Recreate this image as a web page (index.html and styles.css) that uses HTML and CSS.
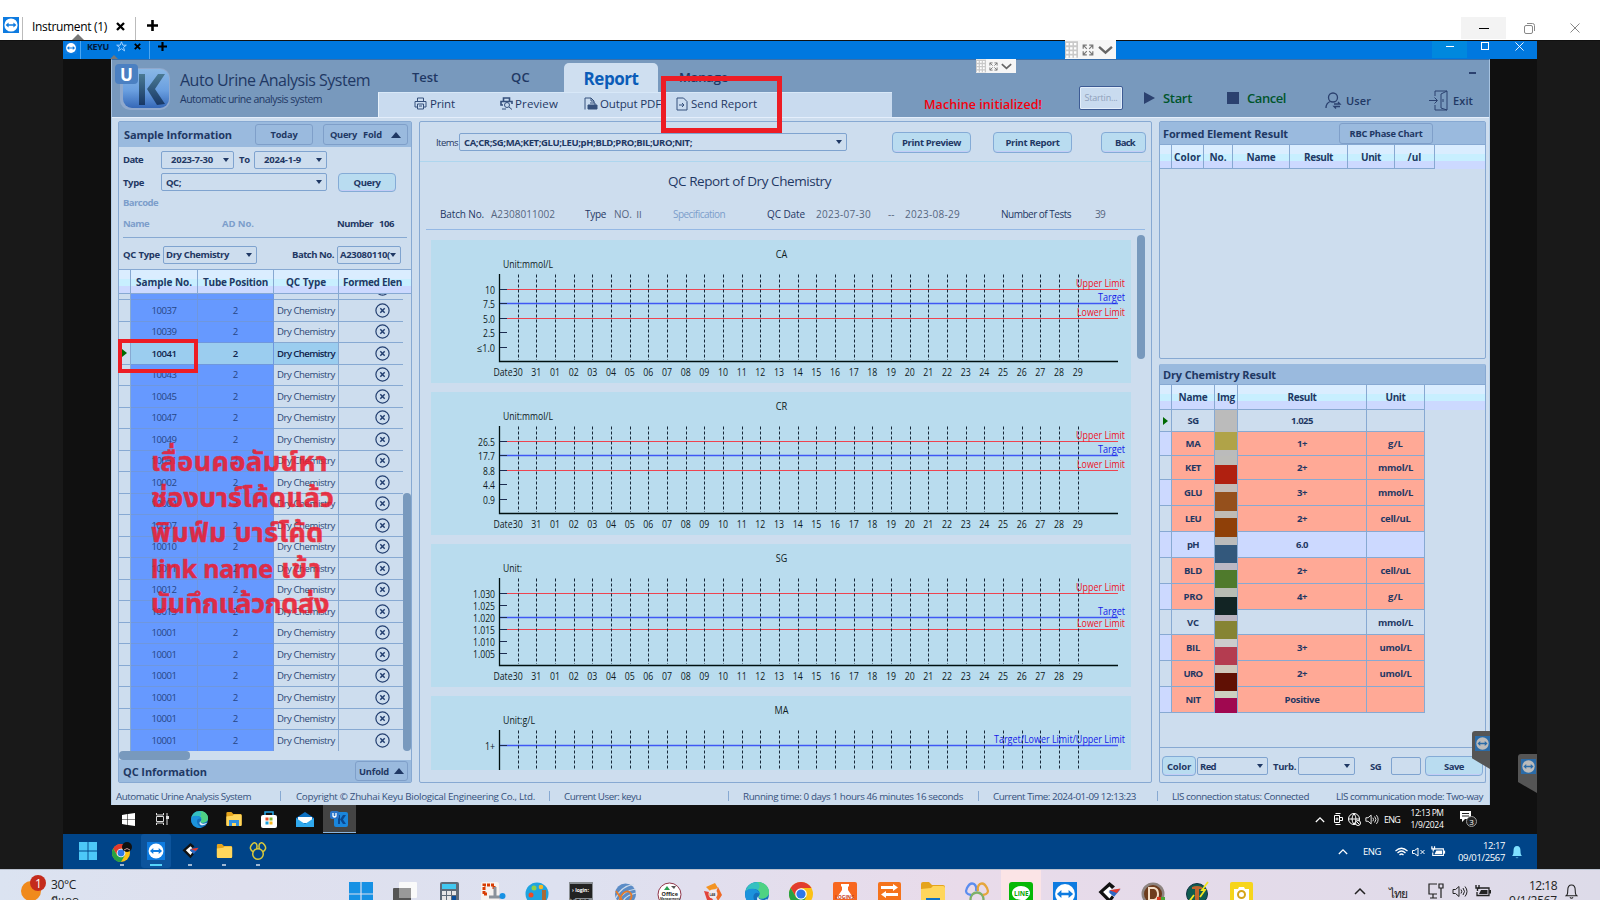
FILE: index.html
```html
<!DOCTYPE html>
<html lang="en">
<head>
<meta charset="utf-8">
<title>Instrument (1)</title>
<link rel="stylesheet" href="styles.css">
</head>
<body>
<svg class="defs" width="0" height="0">
  <symbol id="tv" viewBox="0 0 16 16"><rect width="16" height="16" fill="#0e7be0"/><circle cx="8" cy="8" r="6.6" fill="#fff"/><path d="M2.6 8l3-2.6v1.8h4.8V5.4l3 2.6-3 2.6V8.8H5.6v1.8z" fill="#0e7be0"/></symbol>
  <symbol id="win" viewBox="0 0 24 24"><path d="M0 0h11.4v11.4H0zM12.6 0H24v11.4H12.6zM0 12.6h11.4V24H0zM12.6 12.6H24V24H12.6z"/></symbol>
  <symbol id="edge" viewBox="0 0 24 24"><circle cx="12" cy="12" r="12" fill="#1470bd"/><path d="M.3 10C1.500 4 6 0 12.500 0 19 0 24 4.500 24 10c0 4-3 6.500-7 6.500-2.500 0-4-1-3-2.500 2-3-.5-7-5.500-7C4.500 7 1.500 8 .3 10z" fill="#35c1c0"/><path d="M12.500 0C19 0 24 4.500 24 10c0 4-3 6.500-7 6.500-2.500 0-4-1-3-2.500 2-3 1-5-1-6.500 2-2 2-5-.5-7.500z" fill="#4fd283"/><path d="M.2 10C3 5 13 5.500 14.500 12 12 9.500 9 11 8.500 14c-.5 4 2.500 8 7 9.300C7 26-.8 20 .2 10z" fill="#1c93dc"/><path d="M13.500 14c-1 2 1.500 4 4.500 4 2 0 4-.7 5-1.300-1.500 2.300-4 3.300-6.500 3.300-4 0-6-3-3-6z" fill="#e4eff8"/></symbol>
  <symbol id="chrome" viewBox="0 0 24 24"><circle cx="12" cy="12" r="12" fill="#fbc116"/><path d="M1.6 6A12 12 0 0 1 22.4 6H12l-5 9z" fill="#e23b2e"/><path d="M1.6 6A12 12 0 0 0 12 24l5.2-9-10 .5z" fill="#27a243"/><circle cx="12" cy="12" r="5.8" fill="#fff"/><circle cx="12" cy="12" r="4.6" fill="#2f78e8"/></symbol>
  <symbol id="folder" viewBox="0 0 24 22"><path d="M0 2q0-2 2-2h6l3 3h11q2 0 2 2v15q0 2-2 2H2q-2 0-2-2z" fill="#e5a41c"/><path d="M0 7l10-1 2-2h10q2 0 2 2v14q0 2-2 2H2q-2 0-2-2z" fill="#ffd65c"/></symbol>
  <symbol id="arrowbox" viewBox="0 0 24 24"><path d="M0 11L12 0l6 5-7 6 6 6-5 6z" fill="#111"/><path d="M5 11l7-6 3 3-4 3 4 3-3 4z" fill="#fff"/><path d="M12 9l12-1-7 8-5-4z" fill="#2d68c4"/><path d="M12 9l12-2-4 5z" fill="#e33a2e"/></symbol>
  <symbol id="dots" viewBox="0 0 11 14"><rect width="11" height="14" fill="#c9c9c9"/><path d="M1 2.5h9M1 6h9M1 9.500h9M1 13h9" stroke="#fff" stroke-width="2" stroke-dasharray="2 1.3"/></symbol>
  <symbol id="expand" viewBox="0 0 10 10"><path d="M1 4V1h3M6 1h3v3M9 6v3H6M4 9H1V6M1 1l3 3M9 1L6 4M9 9L6 6M1 9l3-3" fill="none" stroke="#777"/></symbol>
  <symbol id="chev" viewBox="0 0 14 9"><path d="M1 1.500l6 5.500 6-5.500" fill="none" stroke="#666" stroke-width="2.200"/></symbol>
  <symbol id="up" viewBox="0 0 12 8"><path d="M1 7l5-5 5 5" fill="none" stroke="currentColor" stroke-width="1.500"/></symbol>
  <symbol id="plus" viewBox="0 0 11 11"><path d="M5.500 0v11M0 5.500h11" stroke="#000" stroke-width="2.600"/></symbol>
  <symbol id="cross" viewBox="0 0 9 9"><path d="M1 1l7 7M8 1L1 8" stroke="#000" stroke-width="2.300"/></symbol>
  <symbol id="x" viewBox="0 0 10 10"><path d="M.5.5l9 9M9.500.5l-9 9" stroke="currentColor" fill="none"/></symbol>
  <symbol id="bell" viewBox="0 0 12 14"><path d="M1 11q1.500-1 1.500-5Q2.500 1 6 1t3.500 5q0 4 1.500 5zM4.500 12.500q1.500 1.500 3 0" /></symbol>
  <symbol id="sound" viewBox="0 0 16 12"><path d="M1 4h2.500L7 1v10L3.500 8H1zM9 4q1.500 2 0 4M11 2.500q3 3.500 0 7M13 1q4 5 0 10" fill="none" stroke="currentColor"/></symbol>
  <symbol id="batt" viewBox="0 0 17 12"><path d="M3 3h11v7.500H2V7" fill="none" stroke="currentColor" stroke-width="1.300"/><path d="M6 5h6.500v4H4z" fill="currentColor"/><path d="M15 5v3.500" stroke="currentColor" stroke-width="2"/><path d="M1 0v3h3V0M2.500 3v3" stroke="currentColor" fill="none" stroke-width="1.400"/></symbol>
</svg>

<header class="outer-tabs">
  <svg class="tv16"><use href="#tv"/></svg>
  <div class="outer-tab"><span data-fit="75">Instrument (1)</span><svg class="i9"><use href="#cross"/></svg><i class="notch"></i></div>
  <svg class="i11"><use href="#plus"/></svg>
  <div class="win-btns">
    <span class="hot"><i></i></span>
    <span><svg width="11" height="11" fill="none" stroke="#888"><rect x=".5" y="2.500" width="8" height="8" rx="1.500"/><path d="M3 .5h5.500q2 0 2 2V8"/></svg></span>
    <span><svg width="10" height="10"><use href="#x"/></svg></span>
  </div>
</header>

<main class="viewer">
<div class="remote">
  <div class="remote-tabs">
    <svg class="i12"><use href="#tv"/></svg>
    <div class="remote-tab"><b data-fit="22">KEYU</b>
      <svg width="11" height="11" fill="none" stroke="#9fd0ff"><path d="M5.500.8l1.300 3.400h3.500L7.500 6.300l1.100 3.600-3.100-2.200-3.100 2.200 1.100-3.600L.7 4.200h3.500z"/></svg>
      <svg class="i7"><use href="#cross"/></svg><i class="notch brown"></i></div>
    <svg class="i9 p2"><use href="#plus"/></svg>
    <div class="grip big"><svg width="13" height="19"><use href="#dots"/></svg><svg width="12" height="12"><use href="#expand"/></svg><svg width="15" height="10"><use href="#chev"/></svg></div>
    <div class="remote-btns"><span class="hot"><i></i></span><span><i class="sq"></i></span><span><svg width="9" height="9"><use href="#x"/></svg></span></div>
  </div>

  <div class="desk">
  <div class="app">
    <div class="app-head">
      <div class="brand">
        <svg width="60" height="52" viewBox="0 0 60 52">
          <defs><linearGradient id="k" x2="0" y2="1"><stop offset="0" stop-color="#8ab8e6"/><stop offset=".55" stop-color="#6a9fe0"/><stop offset="1" stop-color="#3568b8"/></linearGradient>
          <linearGradient id="kk" x2="0" y2="1"><stop offset="0" stop-color="#4a7a94"/><stop offset="1" stop-color="#173766"/></linearGradient></defs>
          <rect x="8" y="8" width="50" height="42" rx="10" fill="#90a9cd"/><rect x="11" y="9" width="46" height="39" rx="9" fill="url(#k)"/>
          <path d="M27 14h6v31h-6zM46 14h7L43 29l10 15-8 1-10-16z" fill="url(#kk)"/>
          <rect x="3" y="4" width="23" height="20" rx="4" fill="#4b80c2"/>
          <text x="8" y="20.500" class="logo-u">U</text>
        </svg>
        <div class="brand-text"><span class="t1" data-fit="190">Auto Urine Analysis System</span><span class="t2" data-fit="142">Automatic urine analysis system</span></div>
      </div>
      <div class="nav">
        <div class="tabs"><span data-fit="26">Test</span><span data-fit="19">QC</span><span class="on"><b data-fit="55">Report</b></span><span data-fit="49">Manage</span></div>
        <div class="tools">
          <svg width="14" height="13" fill="none" stroke="#35507c"><path d="M3.500 4V1h6v3M3 10H1V4.500h11V10h-2M3.500 7h6v5h-6zM5 9h3"/></svg><span data-fit="25">Print</span>
          <svg width="14" height="13" fill="none" stroke="#35507c"><path d="M3.500 4V1h6v3M3 8H1V4.500h11V7" stroke-width="1.600"/><circle cx="7" cy="8" r="2.500"/><path d="M9 10l3 2.500M2 12h4"/></svg><span data-fit="43">Preview</span>
          <svg width="14" height="14" fill="none" stroke="#35507c"><path d="M1 12.500V1h6l3 3v2M7 1v3h3"/><path d="M4 8h9v4H4z" fill="#35507c"/><path d="M6 6h5v2" /></svg><span data-fit="61">Output PDF</span>
          <svg width="12" height="14" fill="none" stroke="#35507c"><path d="M1 1h6.500L11 4.500V13H1zM3 8h5M6 6l2 2-2 2"/></svg><span data-fit="66">Send Report</span>
        </div>
      </div>
      <div class="controls">
        <b class="alert" data-fit="118">Machine initialized!</b>
        <button class="starting"><span data-fit="33">Startin...</span></button>
        <div class="ctl green"><svg width="11" height="12"><path d="M0 0l11 6-11 6z" fill="#2b416f"/></svg><b data-fit="29">Start</b></div>
        <div class="ctl green"><i class="stop"></i><b data-fit="39">Cancel</b></div>
        <div class="ctl user"><svg width="16" height="17" fill="none" stroke="#2b416f" stroke-width="1.300"><circle cx="8" cy="5.500" r="4.500"/><path d="M1 16q0-5 4.500-6.500M9 12h6l-2-2M15 14.500H9l2 2"/></svg><b data-fit="25">User</b></div>
        <div class="ctl user"><svg width="19" height="21" fill="none" stroke="#2b416f"><path d="M6 6V1h12v19H6v-5M0 10.500h8M5.500 7.500l3 3-3 3M18 1l-6 3v14l6 2M14 9v3"/></svg><b data-fit="20">Exit</b></div>
      </div>
      <i class="app-min"></i>
      <div class="grip small"><svg width="10" height="14"><use href="#dots"/></svg><svg width="9" height="9"><use href="#expand"/></svg><svg width="11" height="7"><use href="#chev"/></svg></div>
    </div>

    <div class="body">
      <section class="panel left">
        <div class="bar bar-sample"><b data-fit="108">Sample Information</b><button class="ghost"><span data-fit="27">Today</span></button><button class="ghost"><span data-fit="27">Query</span><span data-fit="19">Fold</span><i class="tri-up"></i></button></div>
        <div class="form f-date"><b data-fit="20">Date</b><div class="sel w73"><b data-fit="42">2023-7-30</b></div><b data-fit="11">To</b><div class="sel w73"><b data-fit="37">2024-1-9</b></div></div>
        <div class="form f-type"><b data-fit="21">Type</b><div class="sel"><b data-fit="15">QC;</b></div><button class="btn"><b data-fit="27">Query</b></button></div>
        <div class="form f-bar"><b class="dim" data-fit="35">Barcode</b></div>
        <div class="form f-name"><b class="dim" data-fit="26">Name</b><b class="dim" data-fit="32">AD No.</b><b data-fit="36">Number</b><b data-fit="15">106</b></div>
        <div class="form f-qc"><b data-fit="37">QC Type</b><div class="sel"><b data-fit="63">Dry Chemistry</b></div><b data-fit="42">Batch No.</b><div class="sel clip"><b data-fit="50">A23080110(</b></div></div>
        <div class="s-head"><i></i><b data-fit="56">Sample No.</b><b data-fit="65">Tube Position</b><b data-fit="40">QC Type</b><b class="fe" data-fit="59">Formed Elen</b></div>
        <div class="s-wrap"><div class="s-list" id="samples"></div><i class="vthumb"></i></div>
        <div class="hscroll"><i></i></div>
        <div class="bar bar-qc"><b data-fit="84">QC Information</b><button class="ghost"><span data-fit="30">Unfold</span><i class="tri-up"></i></button></div>
      </section>

      <section class="panel mid">
        <div class="items"><span data-fit="22">Items</span><div class="sel"><b data-fit="228">CA;CR;SG;MA;KET;GLU;LEU;pH;BLD;PRO;BIL;URO;NIT;</b></div><button class="btn"><b data-fit="59">Print Preview</b></button><button class="btn"><b data-fit="54">Print Report</b></button><button class="btn"><b data-fit="20">Back</b></button></div>
        <h1><span data-fit="163">QC Report of Dry Chemistry</span></h1>
        <div class="meta"><span data-fit="44">Batch No.</span><em data-fit="64">A2308011002</em><span data-fit="21">Type</span><em>NO. <span class="roman">Ⅱ</span></em><span class="dim" data-fit="52">Specification</span><span data-fit="38">QC Date</span><em data-fit="55">2023-07-30</em><em>--</em><em data-fit="55">2023-08-29</em><span data-fit="70">Number of Tests</span><em data-fit="10">39</em></div>
        <div class="chart-scroll"><div class="charts" id="charts"></div><i class="cthumb"></i></div>
      </section>

      <section class="right">
        <div class="panel formed">
          <div class="bar bar-formed"><b data-fit="125">Formed Element Result</b><button class="ghost"><span data-fit="73">RBC Phase Chart</span></button></div>
          <div class="thead th-formed"><i></i><b data-fit="27">Color</b><b data-fit="17">No.</b><b data-fit="29">Name</b><b data-fit="29">Result</b><b data-fit="20">Unit</b><b data-fit="14">/ul</b></div>
        </div>
        <div class="panel dry">
          <div class="bar bar-dry"><b data-fit="113">Dry Chemistry Result</b></div>
          <div class="thead th-dry"><i></i><b data-fit="29">Name</b><b data-fit="18">Img</b><b data-fit="29">Result</b><b data-fit="20">Unit</b></div>
          <div class="dry-body" id="dry"></div>
          <div class="foot"><button class="btn"><b data-fit="24">Color</b></button><div class="sel"><b data-fit="16">Red</b></div><b data-fit="23">Turb.</b><div class="sel w57"></div><b data-fit="11">SG</b><div class="inp"></div><button class="btn"><b data-fit="20">Save</b></button></div>
        </div>
      </section>
    </div>

    <footer class="status"><span data-fit="135">Automatic Urine Analysis System</span><i></i><span data-fit="239">Copyright © Zhuhai Keyu Biological Engineering Co., Ltd.</span><i></i><span data-fit="77">Current User: keyu</span><i></i><span data-fit="220">Running time: 0 days 1 hours 46 minutes 16 seconds</span><i></i><span data-fit="143">Current Time: 2024-01-09 12:13:23</span><i></i><span data-fit="137">LIS connection status: Connected</span><span data-fit="147">LIS communication mode: Two-way</span></footer>
  </div>

  <div class="w10">
    <div class="w10-apps">
      <svg width="13" height="13" viewBox="0 0 24 24" fill="#fff"><path d="M0 3.500L10 2v9.500H0zM11 2L24 0v11.500H11zM0 12.500h10V22L0 20.500zM11 12.500h13V24l-13-2z"/></svg>
      <svg width="13" height="12" fill="none" stroke="#ddd"><path d="M.5 0v2h7V0M.5 12v-2h7v2M.5 3.500h7v5h-7zM11 0v12"/><path d="M10 3h3v3h-3z" fill="#ddd" stroke="none"/></svg>
      <svg width="17" height="17"><use href="#edge"/></svg>
      <svg width="16" height="14"><use href="#folder"/><path d="M3 14V8h10v6h-3v-3H6v3z" fill="#2f8fe0"/></svg>
      <svg width="18" height="17"><path d="M5 4V1h8v3" fill="none" stroke="#25a6e8" stroke-width="1.500"/><rect x="1" y="4" width="16" height="13" rx="2" fill="#fff"/><path d="M5.500 6.500h3v3h-3z" fill="#e8502c"/><path d="M9.500 6.500h3v3h-3z" fill="#7db52d"/><path d="M5.500 10.500h3v3h-3z" fill="#18a0e0"/><path d="M9.500 10.500h3v3h-3z" fill="#fbb820"/></svg>
      <svg width="18" height="17"><path d="M0 7l9-6 9 6v9H0z" fill="#0c6fc0"/><path d="M2 6h14v6H2z" fill="#fff"/><path d="M0 7l9 6 9-6v9H0z" fill="#30a9ee"/></svg>
      <span class="active"><svg width="18" height="16"><rect x="4" y="1" width="14" height="15" rx="2" fill="#1a86dc"/><path d="M8 4h2v9H8zM13 4h3l-3 4.500 3 4.500h-3l-3-4.500z" fill="#0b4890"/><rect width="9" height="8" rx="2" fill="#2b74c8"/><path d="M3 2v3q1.500 2 3 0V2" fill="none" stroke="#fff" stroke-width="1.300"/></svg></span>
    </div>
    <div class="w10-tray">
      <svg width="10" height="7"><use href="#up"/></svg>
      <svg width="10" height="12" fill="none" stroke="#fff"><path d="M2.500 .5h5M2.500 11.500h5M1.500 2.500h5v7h-5zM7 4.500h2.500v3H7"/><circle cx="4" cy="6" r="1"/></svg>
      <svg width="13" height="13" fill="none" stroke="#fff"><circle cx="6" cy="6" r="5.500"/><path d="M.5 6h11M6 .5q-4 5.500 0 11M6 .5q4 5.500 0 11"/><circle cx="10" cy="10" r="2.500" fill="#111"/><path d="M8.500 8.500l3 3"/></svg>
      <svg width="14" height="11"><use href="#sound"/></svg>
      <span data-fit="16">ENG</span>
      <span class="clock"><span data-fit="33">12:13 PM</span><span data-fit="33">1/9/2024</span></span>
      <svg width="20" height="18"><path d="M1 1h11v8H6l-3 3V9H1z" fill="#fff"/><path d="M3 3.500h7M3 6h7" stroke="#222"/><circle cx="12.500" cy="11.500" r="5" fill="#222" stroke="#999"/><text x="10.200" y="14.700" class="badge-num">3</text></svg>
    </div>
  </div>
  </div>

  <div class="w11">
    <div class="w11-apps">
      <span><svg width="18" height="18" fill="#4cc8f8"><use href="#win"/></svg></span>
      <span class="dot"><svg width="21" height="21" viewBox="0 0 21 21"><svg y="3" width="18" height="18"><use href="#chrome"/></svg><circle cx="15" cy="6" r="5" fill="#111"/><path d="M12 9q3-3 6 0" stroke="#c99" fill="none"/></svg></span>
      <span class="dot on"><svg width="18" height="18"><use href="#tv"/></svg></span>
      <span class="dot"><svg width="17" height="16"><use href="#arrowbox"/></svg></span>
      <span class="dot"><svg width="17" height="14"><use href="#folder"/></svg></span>
      <span class="dot"><svg width="18" height="18" fill="none" stroke="#d8c83c" stroke-width="1.500"><circle cx="9" cy="12" r="5.300"/><path d="M4.500 10Q-.5 7 2.500 3q3-4 5-1 1 2 0 5M13.500 10Q18.500 7 15.500 3q-3-4-5-1-1 2 0 5"/></svg></span>
    </div>
    <div class="w11-tray">
      <svg width="10" height="7"><use href="#up"/></svg><span data-fit="18">ENG</span>
      <svg width="13" height="10" fill="none" stroke="#fff" stroke-width="1.200"><path d="M.5 4q6-5.500 12 0M2.500 6q4-4 8 0M4.500 8q2-2 4 0"/></svg>
      <svg width="14" height="10" fill="none" stroke="#fff"><path d="M.5 3.500h2L6 1v8L2.500 6.500h-2zM8.500 3l4 4M12.500 3l-4 4"/></svg>
      <svg width="15" height="11"><use href="#batt"/></svg>
      <span class="clock"><span data-fit="22">12:17</span><span data-fit="47">09/01/2567</span></span>
      <svg width="12" height="14" fill="#7fe0ff"><use href="#bell"/></svg>
    </div>
  </div>
  <div class="tag t-a"><svg width="15" height="15"><use href="#tv"/></svg></div>
  <div class="tag t-b"><svg width="15" height="15"><use href="#tv"/></svg></div>
</div>
</main>

<footer class="taskbar">
  <div class="weather"><svg width="40" height="30"><circle cx="16" cy="21" r="10" fill="#f08a1c"/><circle cx="23" cy="13" r="8" fill="#c42b1c"/><text x="20" y="17.500" class="one">1</text></svg><div><span data-fit="25">30°C</span><span class="sub">มีแดด</span></div></div>
  <div class="pins">
    <span><svg width="24" height="24" fill="#1791e4"><use href="#win"/></svg></span>
    <span><svg width="24" height="24"><rect x="6" width="18" height="16" rx="1" fill="#fafafa"/><rect y="6" width="18" height="16" rx="1" fill="#555"/><path d="M6 6h12v10H6z" fill="#999"/></svg></span>
    <span><svg width="19" height="24"><rect width="19" height="24" rx="2" fill="#5f6b78"/><path d="M2 2h14v5H2z" fill="#41c8f0"/><path d="M2 9h4v4H2zM7 9h4v4H7zM12 9h4v4h-4zM2 14h4v4H2zM7 14h4v4H7z" fill="#e6e6e6"/><path d="M12 14h4v8h-4z" fill="#0a4f9c"/></svg></span>
    <span><svg width="25" height="24"><rect width="18" height="24" rx="2" fill="#f6f2f0"/><path d="M3 12V3h10v5M3 12h3" fill="none" stroke="#d83b01" stroke-width="3" stroke-dasharray="3 1"/><path d="M14 5v10M8 15h14" stroke="#8b929b" stroke-width="3"/><circle cx="21.500" cy="14" r="3" fill="#1791e4"/></svg></span>
    <span><svg width="23" height="23"><circle cx="11" cy="12" r="11.500" fill="#1fa4e0"/><circle cx="5" cy="13" r="2.500" fill="#f04a24"/><circle cx="8" cy="6" r="2.500" fill="#8ed04a"/><circle cx="15" cy="5" r="2.300" fill="#f8b820"/><path d="M16 8h4v14h-4z" fill="#a96b36"/></svg></span>
    <span><svg width="24" height="24"><rect width="24" height="24" fill="#8a8f94"/><path d="M1 2h22v14H1z" fill="#222"/><text x="3" y="10" class="mini">› login:</text><text x="1" y="22" class="mini big">Tera</text></svg></span>
    <span><svg width="23" height="23"><circle cx="11.500" cy="12" r="10.500" fill="#5c8cc6"/><path d="M2 16Q6 5 20 2M4 20Q8 9 22 7M8 23q1-9 14-12" stroke="#cfdcea" stroke-width="1.200" fill="none"/><path d="M5 20q2-8 6-10t6 2-4 9M2 9l6 9" stroke="#e77b28" stroke-width="1.800" fill="none"/></svg></span>
    <span><svg width="25" height="25"><circle cx="12.500" cy="12.500" r="11.500" fill="#fff" stroke="#8f3548"/><path d="M7 8l3-4 3 4z" fill="#2ba050"/><path d="M14 4h5l-2 3z" fill="#555"/><text x="4.500" y="14" class="mini off">Office</text><text x="3" y="18" class="mini xs">Management</text></svg></span>
    <span><svg width="20" height="22"><path d="M3 5l9-4 3 5-8 3z" fill="#f49422"/><path d="M15 5l4 8-4 6-3-6z" fill="#ef6a26"/><path d="M1 9l3 9 7 2-5-10z" fill="#e2433a"/><circle cx="10" cy="12" r="4.500" fill="#efeaf0"/><text x="6.500" y="13.500" class="mini xs">LAB</text></svg></span>
    <span><svg width="24" height="24"><use href="#edge"/></svg></span>
    <span><svg width="24" height="24"><use href="#chrome"/></svg></span>
    <span><svg width="24" height="24"><rect width="24" height="24" rx="2" fill="#f8671f"/><path d="M8 2h8v2l-1 1v3l6 9H3l6-9V5L8 4z" fill="#fff"/><text x="2" y="17" class="mini logn">LOGINS</text></svg></span>
    <span><svg width="23" height="24"><rect width="23" height="24" rx="2" fill="#f5731c"/><path d="M3 4h12V2l5 3.500L15 9V7H3zM20 11H8V9l-5 3.500L8 16v-2h12z" fill="#fff"/><path d="M0 18h23v6H0z" fill="#222"/></svg></span>
    <span><svg width="24" height="22"><use href="#folder"/><path d="M5 16h14v6H5z" fill="#1272c4"/></svg></span>
    <span><svg width="24" height="24" fill="none" stroke-width="2.300"><circle cx="12" cy="17" r="6.500" stroke="#7fb069"/><path d="M6 13Q-1 12 2 6q3-6 7-4 3 2 2 7" stroke="#5b8def"/><path d="M18 13q7-1 4-7-3-6-7-4-3 2-2 7" stroke="#e6a63c"/></svg></span>
    <span class="lit"><svg width="24" height="24"><rect width="24" height="24" rx="3" fill="#06b806"/><path d="M12 4c5 0 9 3 9 7s-5 7-9 10v-3c-5 0-9-3-9-7s4-7 9-7z" fill="#fff"/><text x="5" y="13.500" class="mini line">LINE</text></svg></span>
    <span><svg width="24" height="24"><use href="#tv"/></svg></span>
    <span><svg width="23" height="22"><use href="#arrowbox"/></svg></span>
    <span><svg width="24" height="24"><circle cx="12" cy="12" r="11.500" fill="#8d8480"/><circle cx="12" cy="12" r="9" fill="#6e3c1c"/><path d="M8 6h5q4 1 4 6t-4 6H8z" fill="none" stroke="#f3ddc6" stroke-width="2"/><path d="M16 15h4v3h-4z" fill="#d83a20"/><path d="M20 15h4v3h-4z" fill="#48a838"/></svg></span>
    <span><svg width="23" height="24"><circle cx="11" cy="12" r="10.500" fill="#0f5c50" stroke="#134"/><path d="M6 5q5-2 10 0v2h-3v13H9V7H6z" fill="#c0642c"/><path d="M22 0l-6 8h3l-5 7M8 13l-6 8h4l-3 3" stroke="#f2e51e" stroke-width="1.800" fill="none"/></svg></span>
    <span><svg width="23" height="24"><rect width="23" height="24" rx="2" fill="#f6d51c"/><path d="M4 7h4l1-2h5l1 2h4v11H4z" fill="#fff"/><circle cx="11.500" cy="12.500" r="3.500" fill="none" stroke="#d5a41c" stroke-width="2"/></svg></span>
  </div>
  <div class="tray">
    <svg width="12" height="8"><use href="#up"/></svg>
    <span data-fit="18">ไทย</span>
    <svg width="16" height="16" fill="none" stroke="#222" stroke-width="1.200"><path d="M9 1H1v10h8M5 11v4M2 15h7M11 1h4v4h-4zM13 5v10"/></svg>
    <svg width="16" height="13"><use href="#sound"/></svg>
    <svg width="17" height="12"><use href="#batt"/></svg>
    <span class="clock"><span data-fit="28">12:18</span><span data-fit="48">9/1/2567</span></span>
    <svg width="13" height="15" fill="none" stroke="#222"><use href="#bell"/></svg>
  </div>
</footer>

<div class="mark m-send"></div>
<div class="mark m-row"></div>
<div class="note" lang="th"><div data-fit="177">เลื่อนคอลัมน์หา</div><div data-fit="183">ช่องบาร์โค้ดแล้ว</div><div data-fit="173">พิมฟ์ม บาร์โค้ด</div><div class="mix"><span class="latin" data-fit="122">link name</span><span data-fit="42">เข้า</span></div><div data-fit="178">บันทึกแล้วกดส่ง</div></div>
<script src="app.js"></script>
</body>
</html>
```
FILE: styles.css
```css
* { box-sizing: border-box; }
body { margin: 0; width: 1600px; height: 900px; overflow: hidden; background: #fff; font-family: "Open Sans", "Noto Sans", sans-serif; font-size: 10px; color: #1f3864; position: relative; }
svg { display: block; flex: none; overflow: visible; }
.defs { position: absolute; }
i { display: block; font-style: normal; }
em { font-style: normal; color: #566680; }
button { font: inherit; color: inherit; padding: 0; display: flex; align-items: center; justify-content: center; }
[data-fit] { white-space: nowrap; display: inline-block; flex: none; }
b { font-weight: 700; }

/* outer window */
.outer-tabs { height: 40px; padding: 17px 0 0 3px; display: flex; background: #fff; }
.tv16 { width: 16px; height: 16px; margin-right: 3px; }
.outer-tab { position: relative; width: 114px; height: 23px; border: solid #bbb; border-width: 0 1px; padding: 0 0 5px 9px; display: flex; align-items: center; gap: 9px; font-size: 12px; color: #000; }
.i9 { width: 9px; height: 9px; }
.i11 { width: 11px; height: 11px; margin: 3px 0 0 11px; }
.i12 { width: 12px; height: 12px; margin: 1px 2px 0; }
.i7 { width: 7px; height: 7px; }
.notch { position: absolute; left: 49px; bottom: 0; border: 6px solid transparent; border-top: 0; border-bottom-color: #777; }
.notch.brown { left: 29px; border-width: 0 4px 4px; }
.win-btns { margin: 0 2px 0 auto; display: flex; height: 22px; }
.win-btns span { width: 46px; display: flex; align-items: center; justify-content: center; color: #888; }
.win-btns .hot { width: 45px; background: #f3f3f3; }
.win-btns .hot i { width: 10px; height: 1px; background: #000; }

.viewer { height: 829px; background: #191919; border-top: 1px solid #101010; }
.remote { position: relative; width: 1474px; margin-left: 63px; }
.remote-tabs { height: 18px; background: #0078df; display: flex; position: relative; }
.remote-tab { position: relative; width: 70px; height: 18px; border: solid #4ba6f2; border-width: 0 1px; display: flex; align-items: flex-start; padding: 0 0 0 6px; color: #021a3c; font-size: 9px; line-height: 11px; margin-left: 1px; }
.remote-tab b { margin-right: 7px; }
.remote-tab .i7 { margin: 2px 0 0 7px; }
.p2 { margin: 1px 0 0 8px; }
.grip { position: absolute; display: flex; align-items: center; background: #f6f6f6; }
.grip.big { left: 1002px; top: -1px; width: 51px; height: 19px; gap: 4px; z-index: 2; }
.grip.small { left: 864px; top: -1px; width: 40px; height: 14px; gap: 3px; }
.remote-btns { margin-left: auto; display: flex; color: #fff; }
.remote-btns span { width: 35px; height: 17px; display: flex; align-items: flex-start; justify-content: center; padding-top: 1px; }
.remote-btns .hot { background: #0088de; }
.remote-btns .hot i { width: 8px; height: 1px; background: #fff; margin-top: 4px; }
.remote-btns .sq { width: 8px; height: 8px; border: 1px solid #fff; }

.desk { height: 775px; background: #101010; }
.app { width: 1379px; height: 746px; margin-left: 48px; background: #cdddee; border: solid #b4cee8; border-width: 0 1px; }

/* application header */
.app-head { position: relative; height: 58px; margin: 0 -1px; display: flex; background: #7899bd; border: solid #a6c2e0; border-width: 1px 1px 0; border-top-color: #3a6ea8; }
.brand { width: 266px; display: flex; }
.logo-u { font: 700 17px "Open Sans"; fill: #fff; }
.brand-text { margin-left: 8px; display: flex; flex-direction: column; align-items: flex-start; padding-top: 8px; }
.t1 { font-size: 16px; line-height: 24px; }
.t2 { font-size: 10.500px; line-height: 15px; }
.nav { width: 514px; }
.tabs { height: 32px; display: grid; grid-template-columns: 99px 53px 115px auto; padding-left: 34px; align-items: center; font-size: 13px; font-weight: 600; }
.tabs > span { justify-self: start; padding-top: 2px; }
.tabs .on { width: 94px; height: 29px; align-self: end; background: #cfdff0; border-radius: 5px 5px 0 0; color: #0b5cb8; font-size: 17px; display: flex; align-items: center; justify-content: center; padding: 2px 0 0; }
.tools { height: 25px; padding-bottom: 3px; background: #c9dbef; border-left: 1px solid #e8f2fb; border-top: 1px solid #d8e8f8; display: grid; grid-template-columns: 16px 70px 15px 69px 16px 76px 15px auto; padding-left: 35px; align-items: center; font-size: 11.500px; }
.controls { flex: 1; display: grid; grid-template-columns: 155px 65px 83px 98px 104px auto; padding: 18px 0 0 32px; align-items: center; }
.alert { color: #f3000c; font-size: 12.500px; padding-top: 14px; font-weight: 600; }
.starting { width: 44px; height: 24px; background: #c9dbef; border: 1px solid #3d5b94; border-radius: 2px; color: #8fa0ba; font-size: 9px; box-shadow: inset 0 0 0 1px #e3eefa; }
.ctl { display: flex; align-items: center; gap: 8px; font-size: 13px; }
.ctl b { font-weight: 600; }
.green { color: #00552c; }
.user { font-size: 11px; gap: 5px; padding-top: 5px; }
.stop { width: 12px; height: 12px; background: #2b416f; }
.app-min { position: absolute; right: 13px; top: 12px; width: 7px; height: 2px; background: #2b416f; }

/* panels */
.body { display: grid; grid-template-columns: 294px 733px 327px; gap: 7px; padding: 3px 0 0 6px; height: 666px; border-top: 1px solid #e4eefb; }
.panel { border: 1px solid #87a9d2; border-radius: 2px; min-width: 0; }
.bar { background: #9abade; display: grid; align-items: center; font-size: 11px; }
.ghost { height: 21px; background: transparent; border: 1px solid #7f9fc9; border-radius: 3px; font-size: 9.300px; font-weight: 700; gap: 6px; }
.tri-up { border: 5px solid transparent; border-top: 0; border-bottom: 6px solid #1f3864; margin-left: 3px; }
.btn { height: 20px; background: #b9dcf0; border: 1px solid #84abd6; border-radius: 4px; box-shadow: inset 0 -1px #c4ccf6; font-size: 9.500px; }
.sel { position: relative; height: 18px; border: 1px solid #7fa3cf; border-radius: 2px; display: flex; align-items: center; padding-left: 4px; }
.sel::after { content: ""; position: absolute; right: 4px; top: 6px; border: 3.500px solid transparent; border-bottom: 0; border-top: 4px solid #1f3864; }
.w73 { width: 73px; padding-left: 9px; }
.form { display: grid; align-items: center; padding-left: 4px; font-size: 9.500px; }
.bar-sample { height: 25px; grid-template-columns: 131px 68px 85px; padding-left: 5px; }
.bar-sample .ghost:nth-child(2) { width: 58px; }
.f-date { height: 25px; grid-template-columns: 38px 78px 15px 73px; }
.f-type { height: 20px; grid-template-columns: 38px 166px 58px; }
.f-type .btn { margin-left: 11px; width: 58px; height: 19px; }
.f-bar { height: 20px; }
.dim { color: #7c9ecb; }
.f-name { height: 26px; grid-template-columns: 99px 115px 42px auto; margin: 0 4px; padding: 0 0 2px; border-bottom: 1px solid #87a9d2; }
.f-qc { height: 31px; padding-top: 2px; grid-template-columns: 40px 129px 45px 64px; }
.f-qc .sel { width: 94px; padding-left: 2px; }
.f-qc .sel.clip { width: 64px; }
.s-head, .thead { height: 25px; display: grid; background: linear-gradient(#daedff 0 9px, #c8efff 9px 16px, #ccd9ff 16px); border-top: 1px solid #87a9d2; border-bottom: 1px solid #87a9d2; font-size: 10px; }
.s-head { grid-template-columns: 12px 67px 76px 65px auto; }
.s-head > *, .thead > * { border-right: 1px solid #87a9d2; display: flex; align-items: center; justify-content: center; }
.s-head .fe { justify-content: flex-start; padding-left: 4px; width: 65px; border: 0; }
.s-wrap { height: 457px; display: flex; align-items: flex-end; overflow: hidden; }
.s-list { width: 284px; height: 457px; overflow: hidden; }
.s-row { height: 21.500px; display: grid; grid-template-columns: 12px 67px 76px 65px 64px; font-size: 9.600px; color: #2c4876; }
.s-row:first-child { margin-top: -15.500px; }
.s-row > * { border-right: 1px solid #87a9d2; border-bottom: 1px solid #87a9d2; display: flex; align-items: center; justify-content: center; }
.s-row > :last-child { border-right: 0; padding-left: 22px; }
.s-row .blue { background: #6699ff; border-color: #6f97dd; color: #264684; }
.s-row.cur > .blue, .s-row.cur > :nth-child(4) { background: #9bcdef; color: #10234c; font-weight: 600; }
.play { border: 4.500px solid transparent; border-left: 5px solid #006a00; border-right: 0; }
.vthumb { width: 8px; height: 258px; background: #7899bd; border-radius: 4px; }
.hscroll { height: 9px; }
.hscroll i { width: 71px; height: 9px; border-radius: 4px; background: #7899bd; }
.bar-qc { height: 22px; grid-template-columns: 232px 53px; padding-left: 4px; }
.bar-qc .ghost { gap: 2px; height: 20px; }

.items { height: 40px; display: grid; grid-template-columns: 23px 433px 101px 108px 44px; padding: 1px 0 0 16px; align-items: center; border-bottom: 1px solid #aed6ee; font-size: 9.500px; }
.items .sel { width: 388px; }
.items .btn { width: 79px; height: 21px; }
.items .btn:last-child { width: 45px; padding-left: 3px; }
h1 { margin: 0; height: 37px; display: flex; align-items: center; justify-content: center; font-size: 13.500px; font-weight: 400; padding-right: 72px; }
.meta { height: 31px; margin: 0 6px; padding-left: 14px; display: grid; grid-template-columns: 51px 94px 29px 59px 94px 49px 72px 17px 96px 94px auto; align-items: center; border-bottom: 1px solid #94b8e4; font-size: 10px; }
.roman { font: 9px "Noto Sans CJK SC", sans-serif; line-height: 1; }
.chart-scroll { display: flex; padding: 10px 0 0 11px; }
.charts { width: 700px; height: 530px; overflow: hidden; display: flex; flex-direction: column; gap: 9px; }
.chart { width: 700px; height: 143px; flex: none; background: #b9dcee; overflow: hidden; }
.chart text { font: 10px "Open Sans"; fill: #0e1a22; }
.chart .red { fill: #ee1226; }
.chart .tgt { fill: #1420e8; }
.cthumb { width: 8px; height: 124px; margin: -5px 0 0 6px; border-radius: 4px; background: #7899bd; }

.right { display: flex; flex-direction: column; gap: 5px; min-width: 0; }
.formed { height: 238px; }
.bar-formed { height: 22px; grid-template-columns: 176px 94px; padding-left: 3px; }
.thead { border-bottom: 0; }
.th-formed { grid-template-columns: 12px 32px 29px 57px 58px 47px 40px; }
.thead > * { border-bottom: 1px solid #87a9d2; }
.dry { flex: 1; border-top: 0; display: flex; flex-direction: column; }
.bar-dry { height: 20px; padding-left: 3px; }
.th-dry, .d-row { grid-template-columns: 12px 43px 23px 129px 58px; }
.th-dry { height: 26px; }
.dry-body { height: 338px; border-bottom: 1px solid #87a9d2; }
.d-row { display: grid; font-weight: 700; font-size: 9.500px; }
.d-row > * { border-right: 1px solid #87a9d2; border-bottom: 1px solid #87a9d2; display: flex; align-items: center; justify-content: center; }
.d-row.odd > * { background: #ccd9ff; }
.d-row.hit > :nth-child(n+2) { background: #ffa996; }
.d-row > .img { border-bottom: 0; align-items: flex-start; overflow: hidden; }
.foot { flex: 1; display: grid; grid-template-columns: 35px 76px 25px 72px 21px 34px 58px; align-items: center; padding: 2px 0 0 2px; font-size: 9.500px; }
.foot .btn:first-child { width: 34px; }
.foot .sel { width: 71px; padding-left: 2px; }
.foot .w57 { width: 57px; }
.inp { width: 30px; height: 18px; border: 1px solid #7fa3cf; border-radius: 2px; }

.status { height: 22px; display: grid; grid-template-columns: 164px 16px 253px 15px 164px 15px 235px 15px 164px 15px 164px auto; padding-left: 4px; align-items: center; color: #35507c; padding-top: 4px; font-size: 9.800px; }
.status i { width: 1px; height: 10px; background: #87a9d2; }

/* inner taskbars */
.w10 { height: 28px; display: flex; justify-content: space-between; color: #fff; }
.w10-apps { display: flex; align-items: center; gap: 18.300px; padding-left: 59px; }
.w10-apps .active { width: 33px; height: 28px; background: #444; border-bottom: 1px solid #8ab4dc; display: flex; align-items: center; justify-content: center; margin-left: -10px; }
.w10-apps svg:nth-child(2) { margin-left: 3px; margin-right: 3px; }
.w10-tray { display: grid; grid-template-columns: 18px 15px 17px 19px 22px 53px 28px; align-items: center; width: 222px; font-size: 9px; }
.clock { display: flex; flex-direction: column; align-items: center; line-height: 12px; }
.w10-tray .clock { font-size: 8.500px; width: 42px; }
.badge-num { font: 8px "Open Sans"; fill: #fff; }
.w11 { height: 36px; background: #004488; display: flex; justify-content: space-between; color: #fff; }
.w11-apps { display: flex; padding-left: 10px; gap: 4px; }
.w11-apps span { position: relative; width: 30px; height: 34px; display: flex; align-items: center; justify-content: center; }
.w11-apps .dot::after { content: ""; position: absolute; bottom: 2px; left: 13px; width: 4px; height: 2px; background: #9db7d3; }
.w11-apps .on { background: #0d549c; border-radius: 3px; }
.w11-apps .dot.on::after { left: 9px; width: 12px; background: #56d4fa; }
.w11-tray { display: grid; grid-template-columns: 25px 32px 17px 19px 26px 54px 20px; align-items: center; font-size: 9.500px; width: 199px; padding-bottom: 1px; }
.w11-tray .clock { align-items: flex-end; width: 48px; }
.tag { position: absolute; background: #555; color: #fff; width: 18px; height: 38px; padding: 5px 0 0 3px; border-radius: 3px 0 0 0; clip-path: polygon(0 0, 100% 0, 100% 100%, 0 72%); }
.tag svg { opacity: .6; }
.t-a { left: 1409px; top: 690px; }
.t-b { left: 1455px; top: 713px; width: 19px; height: 39px; }

/* outer taskbar */
.taskbar { position: relative; height: 31px; display: flex; background: linear-gradient(90deg, #dbe3f1, #dfe0ee 15%, #dde1f0 35%, #e9dbea 60%, #dddbe9); color: #222; overflow: hidden; border-top: 1px solid #b9c0cd; }
.weather { width: 339px; display: flex; padding-left: 15px; }
.weather div { display: flex; flex-direction: column; font-size: 12px; line-height: 16px; padding-top: 7px; margin-left: -4px; align-items: flex-start; }
.sub { font-size: 11px; line-height: 16px; }
.one { font: 12px "Open Sans"; fill: #fff; }
.pins { display: flex; width: 1015px; }
.pins span { width: 44px; height: 40px; display: flex; justify-content: center; padding-top: 12px; flex: none; }
.pins .lit { background: #fbe4e6; box-shadow: inset 2px 0 #e9dbea, inset -2px 0 #e9dbea; }
.mini { font: 700 5px "Open Sans"; fill: #fff; }
.mini.big { font-size: 9px; fill: #222; }
.mini.off { font-size: 5.500px; fill: #222; }
.mini.xs { font-size: 3px; fill: #333; }
.mini.logn { font-size: 5px; fill: #c8401a; }
.mini.line { font-size: 6.500px; fill: #06a806; }
.tray { display: grid; grid-template-columns: 35px 39px 24px 23px 33px 57px 14px; align-items: center; height: 29px; font-size: 12px; flex: none; }
.tray > svg, .tray > span { margin-top: 4px; }
.tray > span:nth-child(2) { margin-top: 8px; }
.tray .clock { width: 49px; align-self: start; align-items: flex-end; line-height: 15px; margin-top: 8px; }

/* annotations drawn over the screen */
.mark { position: absolute; border: 5px solid #ed1c24; }
.m-send { left: 661px; top: 76px; width: 121px; height: 57px; }
.m-row { left: 118px; top: 339px; width: 80px; height: 34px; border-width: 4px; }
.note { position: absolute; left: 151px; top: 443px; color: #ed1c2e; opacity: .87; font: 700 27px/35.500px "Noto Sans", "Noto Sans Thai", sans-serif; -webkit-text-stroke: .5px #ed1c2e; white-space: nowrap; }
.note div { display: block; width: max-content; height: 35.500px; }
.note .mix { display: flex; gap: 8px; align-items: baseline; }
.latin { font-size: 25px; }
```
FILE: app.js
```js
// Sample list
const nos = ['', 10037, 10039, 10041, 10043, 10045, 10047, 10049, 10051, 10002, 10004, 10007, 10010, 10011, 10012, 10013, 10001, 10001, 10001, 10001, 10001, 10001];
const xIcon = '<svg width="15" height="15" fill="none" stroke="#233f70" stroke-width="1.200"><circle cx="7.500" cy="7.500" r="6.600"/><path d="M5.300 5.300l4.400 4.400M9.700 5.300l-4.400 4.400" stroke-width="1.500"/></svg>';
document.getElementById('samples').innerHTML = nos.map(n =>
  `<div class="s-row${n === 10041 ? ' cur' : ''}"><i>${n === 10041 ? '<i class="play"></i>' : ''}</i><span class="blue"><span data-fit="25">${n}</span></span><span class="blue">${n ? 2 : ''}</span><span>${n ? '<span data-fit="58">Dry Chemistry</span>' : ''}</span><span>${xIcon}</span></div>`).join('');

// Dry chemistry rows: name, result, unit, height, row kind, strip colours [colour, height]
const dry = [
  ['SG', '1.025', '', 22, '', [['#bbb', 22]]],
  ['MA', '1+', 'g/L', 24, 'odd hit', [['#b0a348', 18], ['#bbb', 6]]],
  ['KET', '2+', 'mmol/L', 24, 'hit', [['#bcbcb8', 9], ['#b02010', 15]]],
  ['GLU', '3+', 'mmol/L', 26, 'odd hit', [['#b02010', 4], ['#c4bcb8', 8], ['#95501c', 14]]],
  ['LEU', '2+', 'cell/uL', 26, 'hit', [['#95501c', 5], ['#c0bbb4', 7], ['#8f4008', 14]]],
  ['pH', '6.0', '', 26, 'odd', [['#8f4008', 5], ['#bbb', 8], ['#33587c', 13]]],
  ['BLD', '2+', 'cell/uL', 26, 'hit', [['#33587c', 5], ['#bbb8c4', 7], ['#4f7a2c', 14]]],
  ['PRO', '4+', 'g/L', 26, 'odd hit', [['#4f7a2c', 4], ['#b8bcb4', 9], ['#122424', 13]]],
  ['VC', '', 'mmol/L', 25, '', [['#122424', 5], ['#bbb4c0', 6], ['#868434', 14]]],
  ['BIL', '3+', 'umol/L', 26, 'odd hit', [['#868434', 4], ['#ccc', 8], ['#b43c50', 14]]],
  ['URO', '2+', 'umol/L', 26, 'hit', [['#b43c50', 4], ['#d0c8bc', 8], ['#601004', 14]]],
  ['NIT', 'Positive', '', 26, 'odd hit', [['#601004', 4], ['#ccd0c0', 7], ['#a00850', 15]]]
];
const fitOf = { MA: 15, KET: 16, GLU: 18, LEU: 16, BLD: 18, PRO: 19, BIL: 14, URO: 19, NIT: 15, pH: 12, SG: 11, VC: 12, '1.025': 22, '6.0': 12, Positive: 35, 'mmol/L': 35, 'cell/uL': 30, 'umol/L': 32, 'g/L': 15 };
const cell = t => t ? `<span data-fit="${fitOf[t] || 10}">${t}</span>` : '';
document.getElementById('dry').innerHTML = dry.map(([n, r, u, h, k, s]) => {
  let y = 0;
  const strip = s.map(([c, sh]) => { const o = `<rect y="${y}" width="22" height="${sh}" fill="${c}"/>`; y += sh; return o; }).join('');
  return `<div class="d-row ${k}" style="height:${h}px"><i>${n === 'SG' ? '<i class="play"></i>' : ''}</i><span>${cell(n)}</span><span class="img"><svg width="22" height="${h}">${strip}</svg></span><span>${cell(r)}</span><span>${cell(u)}</span></div>`;
}).join('');

// QC charts
const limits = (u, t, l) => [[u, 'Upper Limit', 'red', 49], [t, 'Target', 'tgt', 27], [l, 'Lower Limit', 'red', 48]];
const charts = [
  ['CA', 'Unit:mmol/L', 50, ['10', '7.5', '5.0', '2.5', '≤1.0'], 14.4, limits(0, 1, 2)],
  ['CR', 'Unit:mmol/L', 50, ['26.5', '17.7', '8.8', '4.4', '0.9'], 14.4, limits(0, 1, 2)],
  ['SG', 'Unit:', 19, ['1.030', '1.025', '1.020', '1.015', '1.010', '1.005'], 11.95, limits(0, 2, 3)],
  ['MA', 'Unit:g/L', 32, ['1+'], 14.4, [[0, 'Target/Lower Limit/Upper Limit', 'tgt', 131]]]
];
const days = ['30', '31'].concat(Array.from({ length: 29 }, (_, i) => String(i + 1).padStart(2, '0')));
const txt = (x, y, s, w, a = 'start', c = '') => `<text class="${c}" x="${x}" y="${y}" text-anchor="${a}" textLength="${w}" lengthAdjust="spacingAndGlyphs">${s}</text>`;
document.getElementById('charts').innerHTML = charts.map(([name, unit, uw, labels, step, lines]) => {
  const open = name === 'MA'; // last chart runs past the bottom of the scroll area
  let o = txt(350.5, 18, name, open ? 14 : 11.5, 'middle') + txt(72, 28, unit, uw);
  for (const [i, , c] of lines) {
    const y = 49.5 + i * step;
    o += `<path d="M69 ${Math.round(y - .5) + .5}H687" stroke="${c === 'red' ? '#ee4450' : '#4058f4'}" stroke-width="${c === 'red' ? 1 : 1.500}"/>`;
  }
  days.forEach((d, i) => {
    const x = 86.7 + i * 18.665;
    o += `<path d="M${Math.round(x) + .5} 34.500V120" stroke="#16283a" stroke-dasharray="3 2"/>`;
    if (!open) o += txt(x, 136, d, 10, 'middle');
  });
  o += '<path d="M68.500 34V121.500H687" fill="none" stroke="#001010" stroke-width="1.300"/>';
  if (!open) o += txt(62.5, 136, 'Date', 19);
  labels.forEach((l, i) => {
    const y = Math.round(49 + i * step) + .5;
    const w = { 2: 10, 3: 12, 4: l[0] === '≤' ? 18 : 17, 5: 22 }[l.length];
    o += `<path d="M69 ${y}h7" stroke="#1c2c50"/>` + txt(64, y + 4.5, l, w, 'end');
  });
  for (const [i, t, c, w] of lines) o += txt(694, 47 + i * step, t, w, 'end', c);
  return `<svg class="chart" viewBox="0 0 700 143">${o}</svg>`;
}).join('');

document.querySelectorAll('[data-fit]').forEach(el => {
  const n = [...el.textContent.replace(/\p{M}/gu, '')].length;
  const r = document.createRange();
  r.selectNodeContents(el);
  const w = r.getBoundingClientRect().width;
  if (n && w) el.style.letterSpacing = ((+el.dataset.fit - w) / n).toFixed(3) + 'px';
});
```
